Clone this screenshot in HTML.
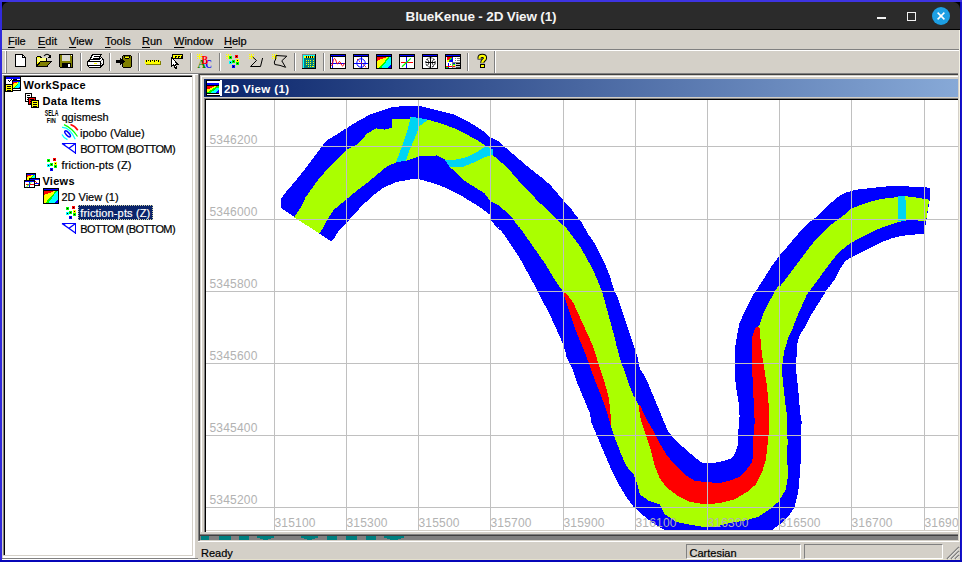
<!DOCTYPE html>
<html><head><meta charset="utf-8"><title>BlueKenue - 2D View (1)</title>
<style>
html,body{margin:0;padding:0;}
body{width:962px;height:562px;overflow:hidden;position:relative;background:#3e34e2;font-family:"Liberation Sans",sans-serif;font-size:11px;color:#000;}
div,span{position:absolute;box-sizing:border-box;}
#botb{left:0;top:560px;width:962px;height:2px;background:#0606b8;}
#title{left:2px;top:3px;width:958px;height:27px;line-height:28px;text-align:center;color:#f4f4f4;font-weight:bold;font-size:13.5px;letter-spacing:-0.15px;}
.mi{top:34px;font-size:11px;line-height:14px;white-space:nowrap;-webkit-text-stroke:0.2px #000;}
.mi u{text-decoration:underline;text-underline-offset:1.6px;text-decoration-thickness:1px;}
#cap{left:224px;top:80px;height:18px;line-height:18px;color:#fff;font-weight:bold;font-size:11.5px;letter-spacing:0.4px;white-space:nowrap;}
.gl{font-family:"Liberation Sans",sans-serif;font-size:12px;fill:#b2b2b2;letter-spacing:0.2px;}
.tr{height:16px;line-height:16px;font-size:11px;white-space:nowrap;-webkit-text-stroke:0.2px;}
.b{font-weight:bold;-webkit-text-stroke:0;}
.st{font-size:11px;line-height:13px;white-space:nowrap;-webkit-text-stroke:0.2px #000;}
</style></head><body>
<div style="left:0;top:2px;width:2px;height:560px;background:#322adc"></div><div style="left:960px;top:2px;width:1px;height:560px;background:#0c0cc4"></div><div style="left:961px;top:2px;width:1px;height:560px;background:#1a14ca"></div><div id="botb"></div>
<div style="left:2px;top:2px;width:958px;height:28px;background:#000;"></div>
<div style="left:2px;top:2px;width:958px;height:27px;background:#2b2b2b;border-radius:7px 7px 0 0;"></div>
<div id="title">BlueKenue - 2D View (1)</div>
<div style="left:877px;top:17px;width:9px;height:2px;background:#f2f2f2;"></div>
<div style="left:907px;top:12px;width:9px;height:9px;border:1.4px solid #f2f2f2;"></div>
<div style="left:932px;top:7px;width:18px;height:18px;background:#1d9fe3;border-radius:9px;"></div>
<svg style="position:absolute;left:932px;top:7px" width="18" height="18"><path d="M5.6 5.6 L12.4 12.4 M12.4 5.6 L5.6 12.4" stroke="#fff" stroke-width="1.5" fill="none"/></svg>
<div style="left:2px;top:30px;width:958px;height:19px;background:#d4d0c8;"></div>
<span class="mi" style="left:8px"><u>F</u>ile</span><span class="mi" style="left:38px"><u>E</u>dit</span><span class="mi" style="left:69px"><u>V</u>iew</span><span class="mi" style="left:105px"><u>T</u>ools</span><span class="mi" style="left:142px"><u>R</u>un</span><span class="mi" style="left:174px"><u>W</u>indow</span><span class="mi" style="left:224px"><u>H</u>elp</span>
<div style="left:2px;top:49px;width:958px;height:1px;background:#808080;"></div>
<div style="left:2px;top:50px;width:958px;height:1px;background:#fff;"></div>
<div style="left:2px;top:51px;width:958px;height:22px;background:#d4d0c8;"></div>
<div style="left:5px;top:51px;width:1px;height:22px;background:#fff;"></div>
<div style="left:6px;top:51px;width:1px;height:22px;background:#808080;"></div>
<div style="left:494px;top:51px;width:1px;height:22px;background:#808080;"></div>
<div style="left:495px;top:51px;width:1px;height:22px;background:#fff;"></div>
<div style="left:2px;top:73px;width:958px;height:1px;background:#808080;"></div>
<div style="left:2px;top:74px;width:196px;height:486px;background:#d4d0c8;"></div>
<div style="left:2px;top:74px;width:196px;height:1px;background:#fff;"></div>
<div style="left:3px;top:75px;width:190px;height:481px;background:#808080;"></div>
<div style="left:4px;top:76px;width:189px;height:480px;background:#000;"></div>
<div style="left:5px;top:77px;width:187px;height:478px;background:#fff;"></div>
<div style="left:192px;top:75px;width:1px;height:481px;background:#d4d0c8;"></div>
<div style="left:3px;top:555px;width:190px;height:1px;background:#d4d0c8;"></div>
<div style="left:193px;top:75px;width:2px;height:483px;background:#fff;"></div>
<div style="left:3px;top:556px;width:192px;height:2px;background:#fff;"></div>
<div style="left:2px;top:558px;width:196px;height:1px;background:#808080;"></div>
<div style="left:2px;top:559px;width:196px;height:1px;background:#fff;"></div>
<div style="left:198px;top:74px;width:762px;height:467px;background:#808080;"></div>
<div style="left:199px;top:74px;width:761px;height:466px;background:#404040;"></div>
<div style="left:198px;top:73px;width:762px;height:1px;background:#808080;"></div>
<div style="left:200px;top:75px;width:760px;height:465px;background:#808080;"></div>
<div style="left:200px;top:540px;width:760px;height:1px;background:#d4d0c8;"></div>
<div style="left:198px;top:541px;width:762px;height:1px;background:#fff;"></div>
<div style="left:201px;top:536px;width:8px;height:4px;background:#008080;"></div>
<div style="left:219px;top:536px;width:12px;height:4px;background:#008080;"></div>
<div style="left:239px;top:536px;width:10px;height:4px;background:#008080;"></div>
<div style="left:257px;top:536px;width:17px;height:2px;background:#008080;"></div>
<div style="left:260px;top:538px;width:11px;height:1px;background:#008080;"></div>
<div style="left:263px;top:539px;width:5px;height:1px;background:#008080;"></div>
<div style="left:301px;top:536px;width:17px;height:2px;background:#008080;"></div>
<div style="left:304px;top:538px;width:11px;height:1px;background:#008080;"></div>
<div style="left:307px;top:539px;width:5px;height:1px;background:#008080;"></div>
<div style="left:327px;top:536px;width:10px;height:4px;background:#008080;"></div>
<div style="left:346px;top:536px;width:11px;height:4px;background:#008080;"></div>
<div style="left:366px;top:536px;width:10px;height:4px;background:#008080;"></div>
<div style="left:384px;top:536px;width:20px;height:2px;background:#008080;"></div>
<div style="left:387px;top:538px;width:14px;height:1px;background:#008080;"></div>
<div style="left:390px;top:539px;width:8px;height:1px;background:#008080;"></div>
<div style="left:200px;top:75px;width:758px;height:461px;background:#404040;"></div>
<div style="left:200px;top:75px;width:758px;height:460px;background:#808080;"></div>
<div style="left:200px;top:75px;width:758px;height:459px;background:#d4d0c8;"></div>
<div style="left:201px;top:76px;width:757px;height:456px;background:#fff;"></div>
<div style="left:202px;top:77px;width:756px;height:455px;background:#d4d0c8;"></div>
<div style="left:204px;top:79px;width:754px;height:18px;background:linear-gradient(90deg,#0a246a 0%,#87a9d7 100%);"></div>
<div id="cap">2D View (1)</div>
<div style="left:204px;top:98px;width:754px;height:434px;background:#808080;"></div>
<div style="left:205px;top:99px;width:753px;height:433px;background:#000;"></div>
<div style="left:206px;top:100px;width:752px;height:431px;background:#d4d0c8;"></div>
<div style="left:206px;top:531px;width:752px;height:1px;background:#fff;"></div>
<div style="left:206px;top:100px;width:752px;height:430px;background:#fff;"></div>
<div style="left:958px;top:73px;width:1px;height:468px;background:#d4d0c8;"></div>
<div style="left:959px;top:30px;width:1px;height:530px;background:#f4f2e4;"></div>
<div style="left:198px;top:542px;width:762px;height:18px;background:#d4d0c8;"></div>
<div style="left:198px;top:559px;width:762px;height:1px;background:#e4e0cc;"></div>
<span class="st" style="left:201px;top:547px;">Ready</span><div style="left:686px;top:544px;width:115px;height:15px;border:1px solid;border-color:#808080 #fff #fff #808080;"></div><span class="st" style="left:689.5px;top:547px;">Cartesian</span><div style="left:804px;top:544px;width:139px;height:15px;border:1px solid;border-color:#808080 #fff #fff #808080;"></div>
<svg style="position:absolute;left:946px;top:546px" width="14" height="14" shape-rendering="crispEdges"><path d="M13 1L1 13M13 5L5 13M13 9L9 13" stroke="#808080" stroke-width="1.6" fill="none" shape-rendering="auto"/><path d="M13 2.2L2.2 13M13 6.2L6.2 13M13 10.2L10.2 13" stroke="#fff" stroke-width="0.8" fill="none" shape-rendering="auto"/></svg>

<svg style="position:absolute;left:206px;top:80px" width="16" height="16" shape-rendering="crispEdges"><rect width="14" height="16" fill="#000"/><rect x="1" y="1" width="15" height="14" fill="#fff"/><rect x="1" y="3" width="12" height="2" fill="#0000ff"/><rect x="1" y="5" width="12" height="1" fill="#000"/><rect x="1" y="6" width="12" height="7" fill="#ff0000"/><path d="M1 9.5L5 8L10 5.5V13H1Z" fill="#ffff00"/><path d="M1 12.5L4 10.5L8 8L13 5.5V13H1Z" fill="#00ff00"/><path d="M4 13L7 11L10 8.5L13 7.5V13Z" fill="#00ffff"/><path d="M9 13L13 10V13Z" fill="#0000ff"/><rect x="1" y="13" width="12" height="1" fill="#000"/><rect x="13" y="1" width="3" height="14" fill="#fff"/><rect x="14" y="0" width="2" height="1" fill="#fff"/><rect x="14" y="15" width="2" height="1" fill="#fff"/></svg>
<svg style="position:absolute;left:0;top:0" width="962" height="76" viewBox="0 0 962 76" shape-rendering="crispEdges"><rect x="80" y="53" width="1" height="18" fill="#808080"/><rect x="81" y="53" width="1" height="18" fill="#ffffff"/><rect x="109" y="53" width="1" height="18" fill="#808080"/><rect x="110" y="53" width="1" height="18" fill="#ffffff"/><rect x="138" y="53" width="1" height="18" fill="#808080"/><rect x="139" y="53" width="1" height="18" fill="#ffffff"/><rect x="190" y="53" width="1" height="18" fill="#808080"/><rect x="191" y="53" width="1" height="18" fill="#ffffff"/><rect x="219" y="53" width="1" height="18" fill="#808080"/><rect x="220" y="53" width="1" height="18" fill="#ffffff"/><rect x="294" y="53" width="1" height="18" fill="#808080"/><rect x="295" y="53" width="1" height="18" fill="#ffffff"/><rect x="323" y="53" width="1" height="18" fill="#808080"/><rect x="324" y="53" width="1" height="18" fill="#ffffff"/><rect x="467" y="53" width="1" height="18" fill="#808080"/><rect x="468" y="53" width="1" height="18" fill="#ffffff"/><path d="M15.5 54.5H22.5L25.5 57.5V66.5H15.5Z" fill="#fff" stroke="#000" stroke-width="1" /><path d="M22.5 54.5V57.5H25.5" fill="none" stroke="#000" stroke-width="1" /><path d="M36.5 66.5V57.5L37.5 56.5H40.5L41.5 58.5H46.5V61.5" fill="#ffff00" stroke="#000" stroke-width="1" /><rect x="37" y="58" width="9" height="4" fill="#ffff80"/><path d="M36.5 66.5L40.5 61.5H51L47 66.5Z" fill="#808000" stroke="#000" stroke-width="1" /><path d="M44 56Q47 52.3 50.2 56.2" fill="none" stroke="#000" stroke-width="1.1" shape-rendering="auto"/><path d="M48 58H51V54.5Z" fill="#000" stroke="none" stroke-width="1" /><rect x="59" y="54" width="14" height="14" fill="#000"/><rect x="60" y="55" width="12" height="12" fill="#808000"/><rect x="62" y="55" width="8" height="6" fill="#d8d8d0"/><rect x="62" y="63" width="9" height="4" fill="#000"/><rect x="68" y="64" width="2" height="3" fill="#fff"/><rect x="71" y="55" width="1" height="1" fill="#fff"/><path d="M59 67L60 68H59Z" fill="#d4d0c8" stroke="none" stroke-width="1" /><path d="M92.5 54.5H101L98.5 59.5H90Z" fill="#fff" stroke="#000" stroke-width="1" /><path d="M93.5 56.5H99M92.5 58H98" fill="none" stroke="#000" stroke-width="1" /><path d="M87.5 61.5L90 59.5H99L101.5 57.5L103 59V64.5L100 67.5H89.5L87.5 65.5Z" fill="#fff" stroke="#000" stroke-width="1" /><path d="M88 61.5H100.5L103 59M100.5 61.5V67M88 65.5H100" fill="none" stroke="#000" stroke-width="1" /><rect x="94" y="63" width="3" height="1" fill="#ffff00"/><rect x="101" y="60" width="1" height="1" fill="#808080"/><rect x="101" y="63" width="1" height="1" fill="#808080"/><path d="M116 60H120V58L124 61.5L120 65V63H116Z" fill="#000" stroke="none" stroke-width="1" /><path d="M123.5 55.5H130.5L131.5 56.5V66.5L130.5 67.5H123.5L122.5 66.5V63L124.5 61.5L122.5 60V56.5Z" fill="#808000" stroke="#000" stroke-width="1" /><path d="M124.5 55.5V57.5L125.5 58.5H128.5L129.5 57.5V55.5" fill="none" stroke="#000" stroke-width="1" /><rect x="125" y="57" width="4" height="1" fill="#ffff00"/><rect x="146" y="61" width="15" height="4" fill="#808000"/><rect x="145" y="60" width="15" height="4" fill="#ffff00"/><rect x="146" y="60" width="1" height="2" fill="#000"/><rect x="148" y="60" width="1" height="1" fill="#000"/><rect x="150" y="60" width="1" height="2" fill="#000"/><rect x="152" y="60" width="1" height="1" fill="#000"/><rect x="154" y="60" width="1" height="2" fill="#000"/><rect x="156" y="60" width="1" height="1" fill="#000"/><rect x="158" y="60" width="1" height="2" fill="#000"/><rect x="172" y="54" width="11" height="5" fill="#000"/><rect x="173" y="55" width="9" height="3" fill="#ffff00"/><rect x="175" y="56" width="1" height="2" fill="#000"/><rect x="175" y="56" width="2" height="1" fill="#000"/><rect x="178" y="56" width="1" height="2" fill="#000"/><rect x="178" y="56" width="2" height="1" fill="#000"/><rect x="181" y="56" width="1" height="2" fill="#000"/><path d="M171.5 57.5V66.5L173.5 64.5L175.5 68.5L177 68L175 64H177.5Z" fill="#fff" stroke="#000" stroke-width="1" /><rect x="199" y="54" width="1" height="5" fill="#ffff00"/><rect x="197" y="56" width="5" height="1" fill="#ffff00"/><rect x="197" y="54" width="1" height="1" fill="#ffff00"/><rect x="201" y="54" width="1" height="1" fill="#ffff00"/><rect x="197" y="58" width="1" height="1" fill="#ffff00"/><rect x="201" y="58" width="1" height="1" fill="#ffff00"/><text x="197.6" y="67.8" font-family="Liberation Serif" font-weight="bold" font-size="11.5" fill="#008000" style="shape-rendering:auto">A</text><text x="205.3" y="67.8" font-family="Liberation Serif" font-weight="bold" font-size="11.5" fill="#0000ff" textLength="6.6" lengthAdjust="spacingAndGlyphs">C</text><text x="201.5" y="63.8" font-family="Liberation Serif" font-weight="bold" font-size="12.5" fill="#ff0000" textLength="6.6" lengthAdjust="spacingAndGlyphs">B</text><rect x="228" y="54" width="1" height="5" fill="#ffff00"/><rect x="226" y="56" width="5" height="1" fill="#ffff00"/><rect x="226" y="54" width="1" height="1" fill="#ffff00"/><rect x="230" y="54" width="1" height="1" fill="#ffff00"/><rect x="226" y="58" width="1" height="1" fill="#ffff00"/><rect x="230" y="58" width="1" height="1" fill="#ffff00"/><rect x="229" y="56" width="3" height="3" fill="#00ff00"/><rect x="230" y="57" width="1" height="1" fill="#000"/><rect x="235" y="55" width="3" height="3" fill="#ff0000"/><rect x="236" y="56" width="1" height="1" fill="#000"/><rect x="236" y="59" width="3" height="3" fill="#ffff00"/><rect x="237" y="60" width="1" height="1" fill="#000"/><rect x="232" y="60" width="3" height="3" fill="#00ff00"/><rect x="233" y="61" width="1" height="1" fill="#000"/><rect x="229" y="61" width="3" height="3" fill="#00ffff"/><rect x="230" y="62" width="1" height="1" fill="#000"/><rect x="236" y="62" width="3" height="3" fill="#00ff00"/><rect x="237" y="63" width="1" height="1" fill="#000"/><rect x="232" y="65" width="3" height="3" fill="#0000ff"/><rect x="233" y="66" width="1" height="1" fill="#000"/><rect x="251" y="54" width="1" height="5" fill="#ffff00"/><rect x="249" y="56" width="5" height="1" fill="#ffff00"/><rect x="249" y="54" width="1" height="1" fill="#ffff00"/><rect x="253" y="54" width="1" height="1" fill="#ffff00"/><rect x="249" y="58" width="1" height="1" fill="#ffff00"/><rect x="253" y="58" width="1" height="1" fill="#ffff00"/><path d="M252.7 57L256.5 60.5L250.5 66.5H260.5L262.6 58" fill="none" stroke="#000" stroke-width="1" shape-rendering="auto"/><rect x="274" y="54" width="1" height="5" fill="#ffff00"/><rect x="272" y="56" width="5" height="1" fill="#ffff00"/><rect x="272" y="54" width="1" height="1" fill="#ffff00"/><rect x="276" y="54" width="1" height="1" fill="#ffff00"/><rect x="272" y="58" width="1" height="1" fill="#ffff00"/><rect x="276" y="58" width="1" height="1" fill="#ffff00"/><path d="M276 55.5L286.8 56.2L281.8 60.8L285.6 67.3L280 65.4L274.8 64.5L274.3 62L275.7 59Z" fill="none" stroke="#000" stroke-width="1" shape-rendering="auto"/><rect x="302" y="54" width="14" height="15" fill="#000"/><rect x="302" y="54" width="13" height="14" fill="#808080"/><rect x="303" y="55" width="12" height="13" fill="#00ffff"/><rect x="304" y="56" width="11" height="12" fill="#008080"/><rect x="304" y="56" width="10" height="2" fill="#ffff00"/><rect x="306" y="56" width="1" height="2" fill="#000"/><rect x="308" y="56" width="1" height="2" fill="#000"/><rect x="310" y="56" width="1" height="2" fill="#000"/><rect x="312" y="56" width="1" height="2" fill="#000"/><rect x="306" y="60" width="1" height="1" fill="#ffff00"/><rect x="308" y="60" width="1" height="1" fill="#ffff00"/><rect x="310" y="60" width="1" height="1" fill="#ffff00"/><rect x="313" y="60" width="1" height="1" fill="#ffff00"/><rect x="306" y="62" width="1" height="1" fill="#ffff00"/><rect x="308" y="62" width="1" height="1" fill="#ffff00"/><rect x="310" y="62" width="1" height="1" fill="#ffff00"/><rect x="313" y="62" width="1" height="1" fill="#ffff00"/><rect x="306" y="64" width="1" height="1" fill="#ffff00"/><rect x="308" y="64" width="1" height="1" fill="#ffff00"/><rect x="310" y="64" width="1" height="1" fill="#ffff00"/><rect x="313" y="64" width="1" height="1" fill="#ffff00"/><rect x="308" y="66" width="1" height="1" fill="#ffff00"/><rect x="310" y="66" width="1" height="1" fill="#ffff00"/><rect x="313" y="66" width="1" height="1" fill="#ffff00"/><rect x="312" y="66" width="2" height="1" fill="#ffff00"/><rect x="330" y="54" width="16" height="15" fill="#000"/><rect x="331" y="55" width="14" height="13" fill="#fff"/><rect x="331" y="55" width="14" height="1" fill="#0000ff"/><rect x="331" y="56" width="14" height="1" fill="#000"/><rect x="332" y="57" width="1" height="11" fill="#0000ff"/><rect x="331" y="63" width="14" height="1" fill="#0000ff"/><path d="M331.5 66C333 64 333 59 334.5 58.5C336 58.5 336.5 64 337.5 64C338.5 64 338.5 61.5 339.5 61.5C340.5 61.5 341.5 66 342.5 66C343.5 66 343.8 64 344.5 63" fill="none" stroke="#ff0000" stroke-width="1" shape-rendering="auto"/><rect x="353" y="54" width="16" height="15" fill="#000"/><rect x="354" y="55" width="14" height="13" fill="#fff"/><rect x="354" y="55" width="14" height="1" fill="#0000ff"/><rect x="354" y="56" width="14" height="1" fill="#000"/><circle cx="361" cy="63" r="4.2" fill="none" stroke="#0000ff" shape-rendering="auto"/><rect x="360.5" y="57" width="1" height="11" fill="#0000ff"/><rect x="354" y="62.5" width="14" height="1" fill="#0000ff"/><path d="M357 59L367 68" fill="none" stroke="#ff0000" stroke-width="1" stroke-dasharray="1.5 1.2" shape-rendering="auto"/><rect x="376" y="54" width="16" height="15" fill="#000"/><rect x="377" y="55" width="14" height="13" fill="#fff"/><rect x="377" y="55" width="14" height="1" fill="#0000ff"/><rect x="377" y="56" width="14" height="1" fill="#000"/><defs><clipPath id="w3"><rect x="377" y="57" width="14" height="11"/></clipPath></defs><g clip-path="url(#w3)"><rect x="377" y="57" width="14" height="11" fill="#ff0000"/><path d="M377 60.7L387.9 56.8V69H377Z" fill="#ffff00" stroke="none" stroke-width="1" /><path d="M378.3 68L387.7 58.2L388 56.8H392V69H378Z" fill="#00ff00" stroke="none" stroke-width="1" /><path d="M381.3 68L390 56.8H392V69Z" fill="#00ffff" stroke="none" stroke-width="1" /><path d="M387.2 68L391 64.6V69Z" fill="#0000ff" stroke="none" stroke-width="1" /></g><rect x="399" y="54" width="16" height="15" fill="#000"/><rect x="400" y="55" width="14" height="13" fill="#fff"/><rect x="400" y="55" width="14" height="1" fill="#0000ff"/><rect x="400" y="56" width="14" height="1" fill="#000"/><rect x="406" y="57" width="1" height="11" fill="#0000ff"/><rect x="401" y="62" width="12" height="1" fill="#ff0000"/><path d="M402 66.8L410.8 58.4" fill="none" stroke="#00ff00" stroke-width="1.2" shape-rendering="auto"/><rect x="422" y="54" width="16" height="15" fill="#000"/><rect x="423" y="55" width="14" height="13" fill="#fff"/><rect x="423" y="55" width="14" height="1" fill="#0000ff"/><rect x="423" y="56" width="14" height="1" fill="#000"/><g shape-rendering="auto" fill="none" stroke="#000"><circle cx="430.5" cy="62.5" r="4.7" stroke-width="1" stroke-dasharray="2.4 1"/><path d="M427.3 59.5Q430.5 62.5 427.3 65.5M433.7 59.5Q430.5 62.5 433.7 65.5" stroke-width="0.8"/></g><rect x="430" y="58" width="1" height="10" fill="#000"/><rect x="426" y="62" width="9" height="1" fill="#000"/><rect x="430" y="57" width="1" height="2" fill="#000"/><rect x="430" y="66" width="1" height="2" fill="#000"/><rect x="445" y="54" width="16" height="15" fill="#000"/><rect x="446" y="55" width="14" height="13" fill="#fff"/><rect x="446" y="55" width="14" height="1" fill="#0000ff"/><rect x="446" y="56" width="14" height="1" fill="#000"/><rect x="447" y="57" width="6" height="5" fill="#ff0000"/><path d="M447 62L453 57V62Z" fill="#0000ff" stroke="none" stroke-width="1" /><path d="M447.5 61.5L452.5 57.5" fill="none" stroke="#00ff00" stroke-width="1.2" /><rect x="447" y="60" width="2" height="2" fill="#ffff00"/><rect x="455" y="58" width="1" height="1" fill="#808080"/><rect x="457" y="58" width="3" height="1" fill="#808080"/><rect x="455" y="60" width="1" height="1" fill="#808080"/><rect x="457" y="60" width="3" height="1" fill="#808080"/><rect x="448" y="63" width="1" height="5" fill="#0000ff"/><rect x="446" y="66" width="6" height="1" fill="#ff0000"/><rect x="446" y="67" width="2" height="1" fill="#00ff00"/><rect x="450" y="64" width="1" height="1" fill="#00ff00"/><rect x="452" y="62" width="8" height="6" fill="#808080"/><rect x="453" y="63" width="7" height="5" fill="#c8c8c8"/><rect x="453" y="63" width="2" height="1" fill="#0000ff"/><rect x="453" y="64" width="2" height="1" fill="#00ff00"/><rect x="453" y="65" width="2" height="1" fill="#ffff00"/><rect x="453" y="66" width="2" height="1" fill="#ff0000"/><rect x="456" y="63" width="4" height="1" fill="#000"/><rect x="456" y="65" width="4" height="1" fill="#000"/><rect x="456" y="67" width="4" height="1" fill="#404040"/><rect x="454" y="56" width="6" height="1" fill="#000"/><g shape-rendering="auto" fill="none"><path d="M479.6 58.6V57.6Q479.6 55.9 482.3 55.9Q485 55.9 485 57.9Q485 59.2 483.6 60.2Q482.3 61.1 482.3 62.8" stroke="#000" stroke-width="4.2"/><path d="M479.6 58.6V57.6Q479.6 55.9 482.3 55.9Q485 55.9 485 57.9Q485 59.2 483.6 60.2Q482.3 61.1 482.3 62.8" stroke="#ffff00" stroke-width="2.2"/><path d="M479.6 58.6V59.6M482.3 62.8V63.2" stroke="#000" stroke-width="4.2"/><path d="M479.6 58V58.7M482.3 62V62.4" stroke="#ffff00" stroke-width="2.2"/></g><rect x="480" y="64" width="5" height="4" fill="#000"/><rect x="481" y="65" width="3" height="2" fill="#ffff00"/></svg>
<div style="left:78px;top:205px;width:75px;height:15px;background:#0a246a;outline:1px dotted #d0d0a0;outline-offset:-1px;"></div><div class="tr b" style="left:23.5px;top:77px;letter-spacing:0.3px;color:#000">WorkSpace</div><div class="tr b" style="left:42.6px;top:93px;letter-spacing:0.3px;color:#000">Data Items</div><div class="tr" style="left:61.5px;top:109px;letter-spacing:0px;color:#000">qgismesh</div><div class="tr" style="left:80px;top:125px;letter-spacing:0px;color:#000">ipobo (Value)</div><div class="tr" style="left:80.3px;top:141px;letter-spacing:-0.63px;color:#000">BOTTOM (BOTTOM)</div><div class="tr" style="left:61.5px;top:157px;letter-spacing:0.14px;color:#000">friction-pts (Z)</div><div class="tr b" style="left:42.4px;top:173px;letter-spacing:0.3px;color:#000">Views</div><div class="tr" style="left:61.4px;top:189px;letter-spacing:0px;color:#000">2D View (1)</div><div class="tr" style="left:80.3px;top:205px;letter-spacing:0.14px;color:#fff">friction-pts (Z)</div><div class="tr" style="left:80.3px;top:221px;letter-spacing:-0.63px;color:#000">BOTTOM (BOTTOM)</div><svg style="position:absolute;left:0;top:0" width="200" height="240" viewBox="0 0 200 240" shape-rendering="crispEdges"><rect x="5" y="77" width="16" height="14" fill="#000"/><rect x="6" y="79" width="14" height="11" fill="#fff"/><rect x="6" y="77" width="14" height="2" fill="#0000ff"/><rect x="8" y="80" width="1" height="1" fill="#000"/><rect x="9" y="81" width="1" height="1" fill="#000"/><rect x="10" y="80" width="1" height="1" fill="#000"/><rect x="11" y="79" width="1" height="1" fill="#000"/><rect x="13" y="79" width="4" height="1" fill="#000"/><rect x="12" y="80" width="9" height="9" fill="#000"/><defs><clipPath id="rw1"><rect x="13" y="82" width="7" height="6"/></clipPath></defs><g clip-path="url(#rw1)"><rect x="13" y="82" width="7" height="6" fill="#ff0000"/><path d="M13 84.04L18.46 81.8V89H13Z" fill="#ffff00" stroke="none" stroke-width="1" /><path d="M13.63 88L18.39 82.6L18.46 81.8H21V89H13Z" fill="#00ff00" stroke="none" stroke-width="1" /><path d="M15.17 88L19.51 81.8H21V89Z" fill="#00ffff" stroke="none" stroke-width="1" /><path d="M18.11 88L20 86.14V89Z" fill="#0000ff" stroke="none" stroke-width="1" /></g><rect x="13" y="81" width="7" height="1" fill="#0000ff"/><rect x="5" y="84" width="8" height="8" fill="#000"/><rect x="6" y="85" width="6" height="6" fill="#ffff00"/><rect x="7" y="86" width="4" height="1" fill="#000"/><rect x="7" y="88" width="4" height="1" fill="#000"/><rect x="7" y="90" width="4" height="1" fill="#000"/><rect x="25" y="93" width="7" height="9" fill="#000"/><rect x="26" y="94" width="5" height="7" fill="#fff"/><rect x="27" y="95" width="3" height="1" fill="#000"/><rect x="27" y="97" width="3" height="1" fill="#000"/><rect x="27" y="99" width="3" height="1" fill="#000"/><rect x="28" y="97" width="8" height="8" fill="#000"/><rect x="29" y="98" width="6" height="6" fill="#ff0000"/><rect x="30" y="99" width="4" height="1" fill="#000"/><rect x="30" y="101" width="4" height="1" fill="#000"/><rect x="30" y="103" width="4" height="1" fill="#000"/><rect x="31" y="100" width="8" height="8" fill="#000"/><rect x="32" y="101" width="6" height="6" fill="#ffff00"/><rect x="33" y="102" width="4" height="1" fill="#000"/><rect x="33" y="104" width="4" height="1" fill="#000"/><rect x="33" y="106" width="4" height="1" fill="#000"/><g shape-rendering="auto"><text x="44.8" y="115.8" font-family="Liberation Sans" font-size="8.6" font-weight="bold" textLength="13.6" lengthAdjust="spacingAndGlyphs" fill="#000">SELA</text><text x="46.8" y="122.8" font-family="Liberation Sans" font-size="7.5" font-weight="bold" textLength="9" lengthAdjust="spacingAndGlyphs" fill="#000">FIN</text></g><g shape-rendering="auto" fill="none" stroke-width="1.2"><path d="M62 127.3C67 127 72 132 75.2 139.3" stroke="#00ffff"/><path d="M62 134.5Q63.5 138 67.5 139.6" stroke="#00ffff"/><path d="M64 124.6Q72 128 77.5 136.5" stroke="#00ff00"/><path d="M70.5 124.6Q75 126 77.8 130.3" stroke="#ff0000" stroke-width="1.6"/><ellipse cx="67.6" cy="133.9" rx="3.8" ry="1.5" transform="rotate(47 67.6 133.9)" stroke="#0000ff" stroke-width="1.5"/></g><rect x="62" y="143" width="14" height="1" fill="#0000ff"/><rect x="75" y="143" width="1" height="10.5" fill="#0000ff"/><path d="M62 143.5L75.5 153M75.5 143.5L69 148.2" fill="none" stroke="#0000ff" stroke-width="1.3" shape-rendering="auto"/><path d="M62 143H67L64.5 145Z" fill="#0000ff" stroke="none" stroke-width="1" shape-rendering="auto"/><rect x="47" y="159" width="3" height="3" fill="#00ff00"/><rect x="48" y="160" width="1" height="1" fill="#000"/><rect x="53" y="158" width="3" height="3" fill="#ff0000"/><rect x="54" y="159" width="1" height="1" fill="#000"/><rect x="54" y="162" width="3" height="3" fill="#ffff00"/><rect x="55" y="163" width="1" height="1" fill="#000"/><rect x="50" y="163" width="3" height="3" fill="#00ff00"/><rect x="51" y="164" width="1" height="1" fill="#000"/><rect x="47" y="164" width="3" height="3" fill="#00ffff"/><rect x="48" y="165" width="1" height="1" fill="#000"/><rect x="54" y="165" width="3" height="3" fill="#00ff00"/><rect x="55" y="166" width="1" height="1" fill="#000"/><rect x="50" y="168" width="3" height="3" fill="#0000ff"/><rect x="51" y="169" width="1" height="1" fill="#000"/><rect x="26" y="173" width="10" height="9" fill="#000"/><defs><clipPath id="rw2"><rect x="27" y="175" width="8" height="6"/></clipPath></defs><g clip-path="url(#rw2)"><rect x="27" y="175" width="8" height="6" fill="#ff0000"/><path d="M27 177.04L33.24 174.8V182H27Z" fill="#ffff00" stroke="none" stroke-width="1" /><path d="M27.72 181L33.16 175.6L33.24 174.8H36V182H27Z" fill="#00ff00" stroke="none" stroke-width="1" /><path d="M29.48 181L34.44 174.8H36V182Z" fill="#00ffff" stroke="none" stroke-width="1" /><path d="M32.84 181L35 179.14V182Z" fill="#0000ff" stroke="none" stroke-width="1" /></g><rect x="27" y="174" width="8" height="1" fill="#0000ff"/><rect x="29" y="178" width="11" height="8" fill="#000"/><rect x="30" y="179" width="9" height="6" fill="#fff"/><rect x="30" y="179" width="9" height="1" fill="#0000ff"/><path d="M35 181L37 183L39 185" fill="none" stroke="#ff0000" stroke-width="1" shape-rendering="auto"/><rect x="35" y="183" width="4" height="1" fill="#0000ff"/><rect x="24" y="180" width="11" height="8" fill="#000"/><rect x="25" y="181" width="9" height="6" fill="#fff"/><rect x="25" y="181" width="9" height="1" fill="#0000ff"/><rect x="26" y="184" width="8" height="1" fill="#ff0000"/><rect x="29" y="182" width="1" height="5" fill="#0000ff"/><path d="M26.5 186.8L31.5 182.2" fill="none" stroke="#00ff00" stroke-width="1" shape-rendering="auto"/><rect x="43" y="188" width="16" height="16" fill="#000"/><defs><clipPath id="rw3"><rect x="44" y="191" width="14" height="12"/></clipPath></defs><g clip-path="url(#rw3)"><rect x="44" y="191" width="14" height="12" fill="#ff0000"/><path d="M44 195.08L54.92 190.8V204H44Z" fill="#ffff00" stroke="none" stroke-width="1" /><path d="M45.26 203L54.78 192.2L54.92 190.8H59V204H44Z" fill="#00ff00" stroke="none" stroke-width="1" /><path d="M48.34 203L57.02 190.8H59V204Z" fill="#00ffff" stroke="none" stroke-width="1" /><path d="M54.22 203L58 199.28V204Z" fill="#0000ff" stroke="none" stroke-width="1" /></g><rect x="44" y="189" width="14" height="1" fill="#0000ff"/><rect x="44" y="190" width="14" height="1" fill="#000"/><rect x="66" y="207" width="3" height="3" fill="#00ff00"/><rect x="67" y="208" width="1" height="1" fill="#000"/><rect x="72" y="206" width="3" height="3" fill="#ff0000"/><rect x="73" y="207" width="1" height="1" fill="#000"/><rect x="73" y="210" width="3" height="3" fill="#ffff00"/><rect x="74" y="211" width="1" height="1" fill="#000"/><rect x="69" y="211" width="3" height="3" fill="#00ff00"/><rect x="70" y="212" width="1" height="1" fill="#000"/><rect x="66" y="212" width="3" height="3" fill="#00ffff"/><rect x="67" y="213" width="1" height="1" fill="#000"/><rect x="73" y="213" width="3" height="3" fill="#00ff00"/><rect x="74" y="214" width="1" height="1" fill="#000"/><rect x="69" y="216" width="3" height="3" fill="#0000ff"/><rect x="70" y="217" width="1" height="1" fill="#000"/><rect x="62" y="223" width="14" height="1" fill="#0000ff"/><rect x="75" y="223" width="1" height="10.5" fill="#0000ff"/><path d="M62 223.5L75.5 233M75.5 223.5L69 228.2" fill="none" stroke="#0000ff" stroke-width="1.3" shape-rendering="auto"/><path d="M62 223H67L64.5 225Z" fill="#0000ff" stroke="none" stroke-width="1" shape-rendering="auto"/></svg>
<svg style="position:absolute;left:0;top:0" width="962" height="562" viewBox="0 0 962 562">
 <defs><clipPath id="vc"><rect x="206" y="100" width="752" height="430"/></clipPath></defs>
 <g clip-path="url(#vc)" shape-rendering="crispEdges">
 <path fill="#0000ff" d="M281 198.9 L286 191.8 L293.1 183.8 L300.2 174.9 L307.4 166 L314.5 156.2 L326.1 140.9 L338.6 133.4 L346.1 128.4 L356.1 122.2 L369.8 114.7 L382.3 110.5 L392.3 107.2 L404.7 106 L419.7 106 L432.2 109 L444.7 112.2 L454.6 114.7 L464.6 119.7 L474.6 125.4 L484.6 132.2 L490 137.2 L500 142.2 L505 147.1 L513.7 154.6 L522.4 162.1 L529.9 168.4 L541.1 177.1 L549.9 184.6 L557.4 193.3 L563.6 200.8 L569.8 207 L576.1 215.8 L582.3 223.2 L583.6 226 L588.6 234.7 L594.8 243.5 L599.8 253.4 L604.8 263.4 L609.8 275.9 L613.5 288.4 L618.5 299.6 L622.2 310.8 L627.2 325.8 L632.2 340.8 L636 353.2 L637.3 356 L639.8 368.5 L646 378.5 L652.3 393.4 L658.5 408.4 L663.5 420.9 L668.5 432.1 L677.2 442.1 L686 449.6 L695.9 458.3 L702.2 462.8 L714.7 462.8 L724.6 460.8 L732.1 458.3 L735.9 450.8 L738.4 443.3 L738.4 430.9 L739.6 415.9 L738.4 400.9 L735.9 385.9 L734.6 371 L734.6 356 L735 348.4 L737 335.9 L739.5 323.4 L743.2 314.7 L748.2 304.7 L753.2 294.7 L759.4 286 L759.4 285.7 L765.7 275.8 L771.9 265.8 L779.4 255.8 L786.9 247.1 L794.4 238.3 L801.8 229.6 L809.3 222.1 L818.1 215.9 L824.3 209.6 L831.8 202.2 L839.3 195.9 L846.8 192.2 L856.7 189.7 L871.7 187.9 L886.7 186.4 L906.6 186.4 L924.1 187.2 L929.8 187.9 L929.8 199.5 L926.2 221.4 L924.1 233.8 L914.1 234.6 L901.6 235.8 L891.7 238.3 L881.7 242.1 L871.7 247.1 L861.7 252.1 L851.7 257 L845.5 260.8 L840.5 268.3 L835.5 278.3 L829.3 287 L829.3 286 L823 296 L816.8 306 L810.6 315.9 L805.6 325.9 L799.3 335.9 L796.9 345.9 L796.4 360.9 L796.4 373.3 L798.1 388.3 L799.3 403.3 L800.6 415.7 L801.6 422 L800.8 442 L800.8 459.4 L799.6 476.9 L798.3 491.9 L794.6 506.8 L788.3 516.8 L779.6 524.3 L770.9 530.8 L666.1 530.8 L654.9 524.3 L644.9 516.8 L633.6 506.8 L626.2 496.9 L618.7 484.4 L611.2 469.4 L603.7 451.9 L597.5 437 L591.2 422 L589.9 413.4 L583.7 398.4 L577.4 383.4 L572.4 368.5 L566.2 356 L566.1 353.2 L561.1 339.5 L554.9 325.8 L548.6 312.1 L541.1 298.4 L534.9 285.9 L527.4 272.2 L519.9 258.4 L512.5 247.2 L505 236 L497.5 226 L501.2 232 L495 225.7 L490 218.3 L489.6 214.5 L479.6 207 L469.6 200.8 L459.6 194.6 L449.6 189.6 L439.7 185.3 L429.7 182.1 L419.5 179.4 L410.6 179.4 L396.3 182 L383.9 187.4 L373.2 195.4 L362.5 205.2 L353.6 214.9 L346.5 223 L338.5 231 L334.9 237.2 L331.4 241.6 L281 208Z"/>
<path fill="#aaff00" d="M294 217.3 L301.1 206.9 L305.6 197.2 L312.7 187.4 L319.8 177.6 L328.7 167.8 L337.6 158.9 L347.3 149.6 L358.6 143.4 L367.3 133.4 L376 128.4 L384.8 129.7 L391.5 127.9 L391.5 119 L409.7 118.5 L411 116.5 L428.4 119.7 L442.2 123.9 L454.6 128.4 L467.1 134.7 L478.3 140.9 L485.8 145.9 L489.6 147.1 L490 149.6 L493.7 155.9 L502.5 163.4 L511.2 172.1 L519.9 182.1 L528.7 190.8 L537.4 200.8 L547.4 209.5 L556.1 218.3 L562.4 224.5 L564.9 226 L572.3 236 L579.8 246 L586.1 257.2 L592.3 268.4 L597.3 279.6 L602.3 292.1 L606 305.8 L609.8 319.6 L613.5 333.3 L617.2 348.3 L621 362 L623.6 368.5 L628.6 383.4 L633.6 395.9 L638.6 404.7 L638.6 404.2 L639.8 404.7 L646 418.4 L653.5 430.9 L659.8 443.3 L667.2 455.8 L676 465.8 L684.7 474.5 L694.7 480.8 L704.7 482 L719.7 483.1 L729.7 480.6 L739.7 476.9 L745.9 470.7 L752.2 461.9 L753.4 451.9 L753.4 437 L754.7 422 L752.1 368.5 L752.1 356 L752.4 335.9 L755.7 327.2 L759.4 325.9 L763.2 313.4 L768.2 303.5 L773.1 294.7 L778.1 286 L780.6 285.7 L788.1 275.8 L795.6 265.8 L803.1 255.8 L810.6 245.8 L818.1 237.1 L825.5 229.6 L834.3 222.1 L843 215.9 L851.7 208.4 L861.7 204.7 L871.7 201.4 L881.7 198.9 L896.7 197.2 L906.6 196.4 L919.1 197.9 L929.1 199.7 L926.1 221.4 L916.6 220.4 L906.6 220.4 L897.9 222.1 L886.7 225.9 L876.7 229.6 L866.7 234.6 L856.7 239.6 L846.8 245.8 L839.3 252.1 L831.8 260.8 L824.3 270.8 L818.1 279.5 L811.8 288.2 L813.1 286 L806.8 294.7 L801.8 306 L796.9 317.2 L793.1 327.2 L788.1 338.4 L784.4 350.9 L782.4 363.3 L782.4 375.8 L783.9 390.8 L785.6 405.8 L787.4 418.2 L787.1 422 L787.6 442 L787.1 459.4 L788.3 474.4 L785.8 489.4 L778.4 501.8 L769.6 509.3 L758.4 516.8 L744.7 520.6 L729.7 523 L714.7 526.8 L702.3 526.8 L687.3 524.3 L676.1 521.8 L664.8 514.3 L659.8 504.3 L648.6 500.6 L639.9 494.4 L637.4 484.4 L633.6 474.4 L626.1 465.8 L619.8 450.8 L614.9 438.3 L611.1 427.1 L609.9 422.1 L606.1 409.6 L601.1 395.9 L596.1 383.4 L591.1 369.7 L586.2 356 L586.1 355.7 L581.1 343.3 L574.8 328.3 L569.8 313.3 L564.9 298.4 L563.6 292.1 L563.6 292.1 L559.9 287.1 L552.4 275.9 L544.9 263.4 L536.2 251 L527.4 238.5 L518.7 226 L518.7 227 L512.5 218.3 L505 210.8 L497.5 204.5 L490 200.8 L484.6 193.3 L474.6 187.1 L464.6 180.8 L454.6 170.9 L449.6 167.1 L444.7 159.6 L437.2 155.4 L429.7 155.9 L419.7 156.4 L413.5 158.4 L406 160.9 L396 162.1 L396.3 162.5 L387.4 166 L376.8 174.9 L366.1 183.8 L355.4 191.8 L344.7 200.7 L334.1 209.6 L326.9 220.3 L319.8 233.6Z"/>
<path fill="#ff0000" d="M563.6 292.1 L564.9 298.4 L569.8 313.3 L574.8 328.3 L581.1 343.3 L586.1 355.7 L586.2 356 L591.1 369.7 L596.1 383.4 L601.1 395.9 L606.1 409.6 L609.9 422.1 L611.1 427.1 L611.1 427.1 L610.4 410.9 L608.6 397.2 L604.9 383.4 L599.9 368.5 L596.1 356 L596 355.7 L592.3 344.5 L586.1 330.8 L579.8 317.1 L573.6 303.3 L567.3 294.6Z"/>
<path fill="#ff0000" d="M638.6 404.2 L639.8 404.7 L646 418.4 L653.5 430.9 L659.8 443.3 L667.2 455.8 L676 465.8 L684.7 474.5 L694.7 480.8 L704.7 482 L719.7 483.1 L729.7 480.6 L739.7 476.9 L745.9 470.7 L752.2 461.9 L753.4 451.9 L753.4 437 L754.7 422 L752.1 368.5 L752.1 356 L752.4 335.9 L755.7 327.2 L759.4 327.2 L760.7 340.9 L762.1 356 L764.6 371 L767 385.9 L768.3 400.9 L769.5 415.9 L768.9 422 L768.9 432 L767.6 444.5 L765.9 459.4 L762.1 471.9 L755.9 484.4 L747.2 491.9 L734.7 499.3 L719.7 503.1 L704.8 504.3 L689.8 501.8 L677.3 495.6 L666.1 486.9 L659.8 478.3 L654.8 465.8 L651 450.8 L646 435.8 L641 420.9 L638.6 405.9Z"/>
<path fill="#00d4f4" d="M411 116.5 L428.4 119.7 L419.7 125.9 L414.7 138.4 L409.7 149.6 L406 160.9 L396 162.1 L402.2 145.9 L407.2 130.9Z"/>
<path fill="#00d4f4" d="M485.8 145.9 L493.3 149.6 L493.3 154.6 L484.6 157.1 L474.6 162.1 L462.1 167.1 L449.6 167.1 L444.7 159.6 L455.9 159.6 L467.1 157.1 L477.1 152.1Z"/>
<path fill="#00d4f4" d="M897.9 195.9 L905.4 195.9 L906.1 220.4 L897.9 221.4Z"/>
 <rect x="274" y="100" width="1" height="430" fill="#c0c0c0"/><rect x="346" y="100" width="1" height="430" fill="#c0c0c0"/><rect x="418" y="100" width="1" height="430" fill="#c0c0c0"/><rect x="490" y="100" width="1" height="430" fill="#c0c0c0"/><rect x="563" y="100" width="1" height="430" fill="#c0c0c0"/><rect x="635" y="100" width="1" height="430" fill="#c0c0c0"/><rect x="707" y="100" width="1" height="430" fill="#c0c0c0"/><rect x="779" y="100" width="1" height="430" fill="#c0c0c0"/><rect x="851" y="100" width="1" height="430" fill="#c0c0c0"/><rect x="924" y="100" width="1" height="430" fill="#c0c0c0"/><rect x="206" y="146" width="752" height="1" fill="#c0c0c0"/><rect x="206" y="219" width="752" height="1" fill="#c0c0c0"/><rect x="206" y="291" width="752" height="1" fill="#c0c0c0"/><rect x="206" y="363" width="752" height="1" fill="#c0c0c0"/><rect x="206" y="435" width="752" height="1" fill="#c0c0c0"/><rect x="206" y="507" width="752" height="1" fill="#c0c0c0"/>
 </g>
 <g clip-path="url(#vc)"><text x="209.5" y="144" class="gl">5346200</text><text x="209.5" y="216" class="gl">5346000</text><text x="209.5" y="288" class="gl">5345800</text><text x="209.5" y="360" class="gl">5345600</text><text x="209.5" y="432" class="gl">5345400</text><text x="209.5" y="504" class="gl">5345200</text><text x="274.5" y="526.5" class="gl">315100</text><text x="346.5" y="526.5" class="gl">315300</text><text x="418.5" y="526.5" class="gl">315500</text><text x="490.5" y="526.5" class="gl">315700</text><text x="563.5" y="526.5" class="gl">315900</text><text x="635.5" y="526.5" class="gl">316100</text><text x="707.5" y="526.5" class="gl">316300</text><text x="779.5" y="526.5" class="gl">316500</text><text x="851.5" y="526.5" class="gl">316700</text><text x="924.5" y="526.5" class="gl">316900</text></g>
</svg>
</body></html>
